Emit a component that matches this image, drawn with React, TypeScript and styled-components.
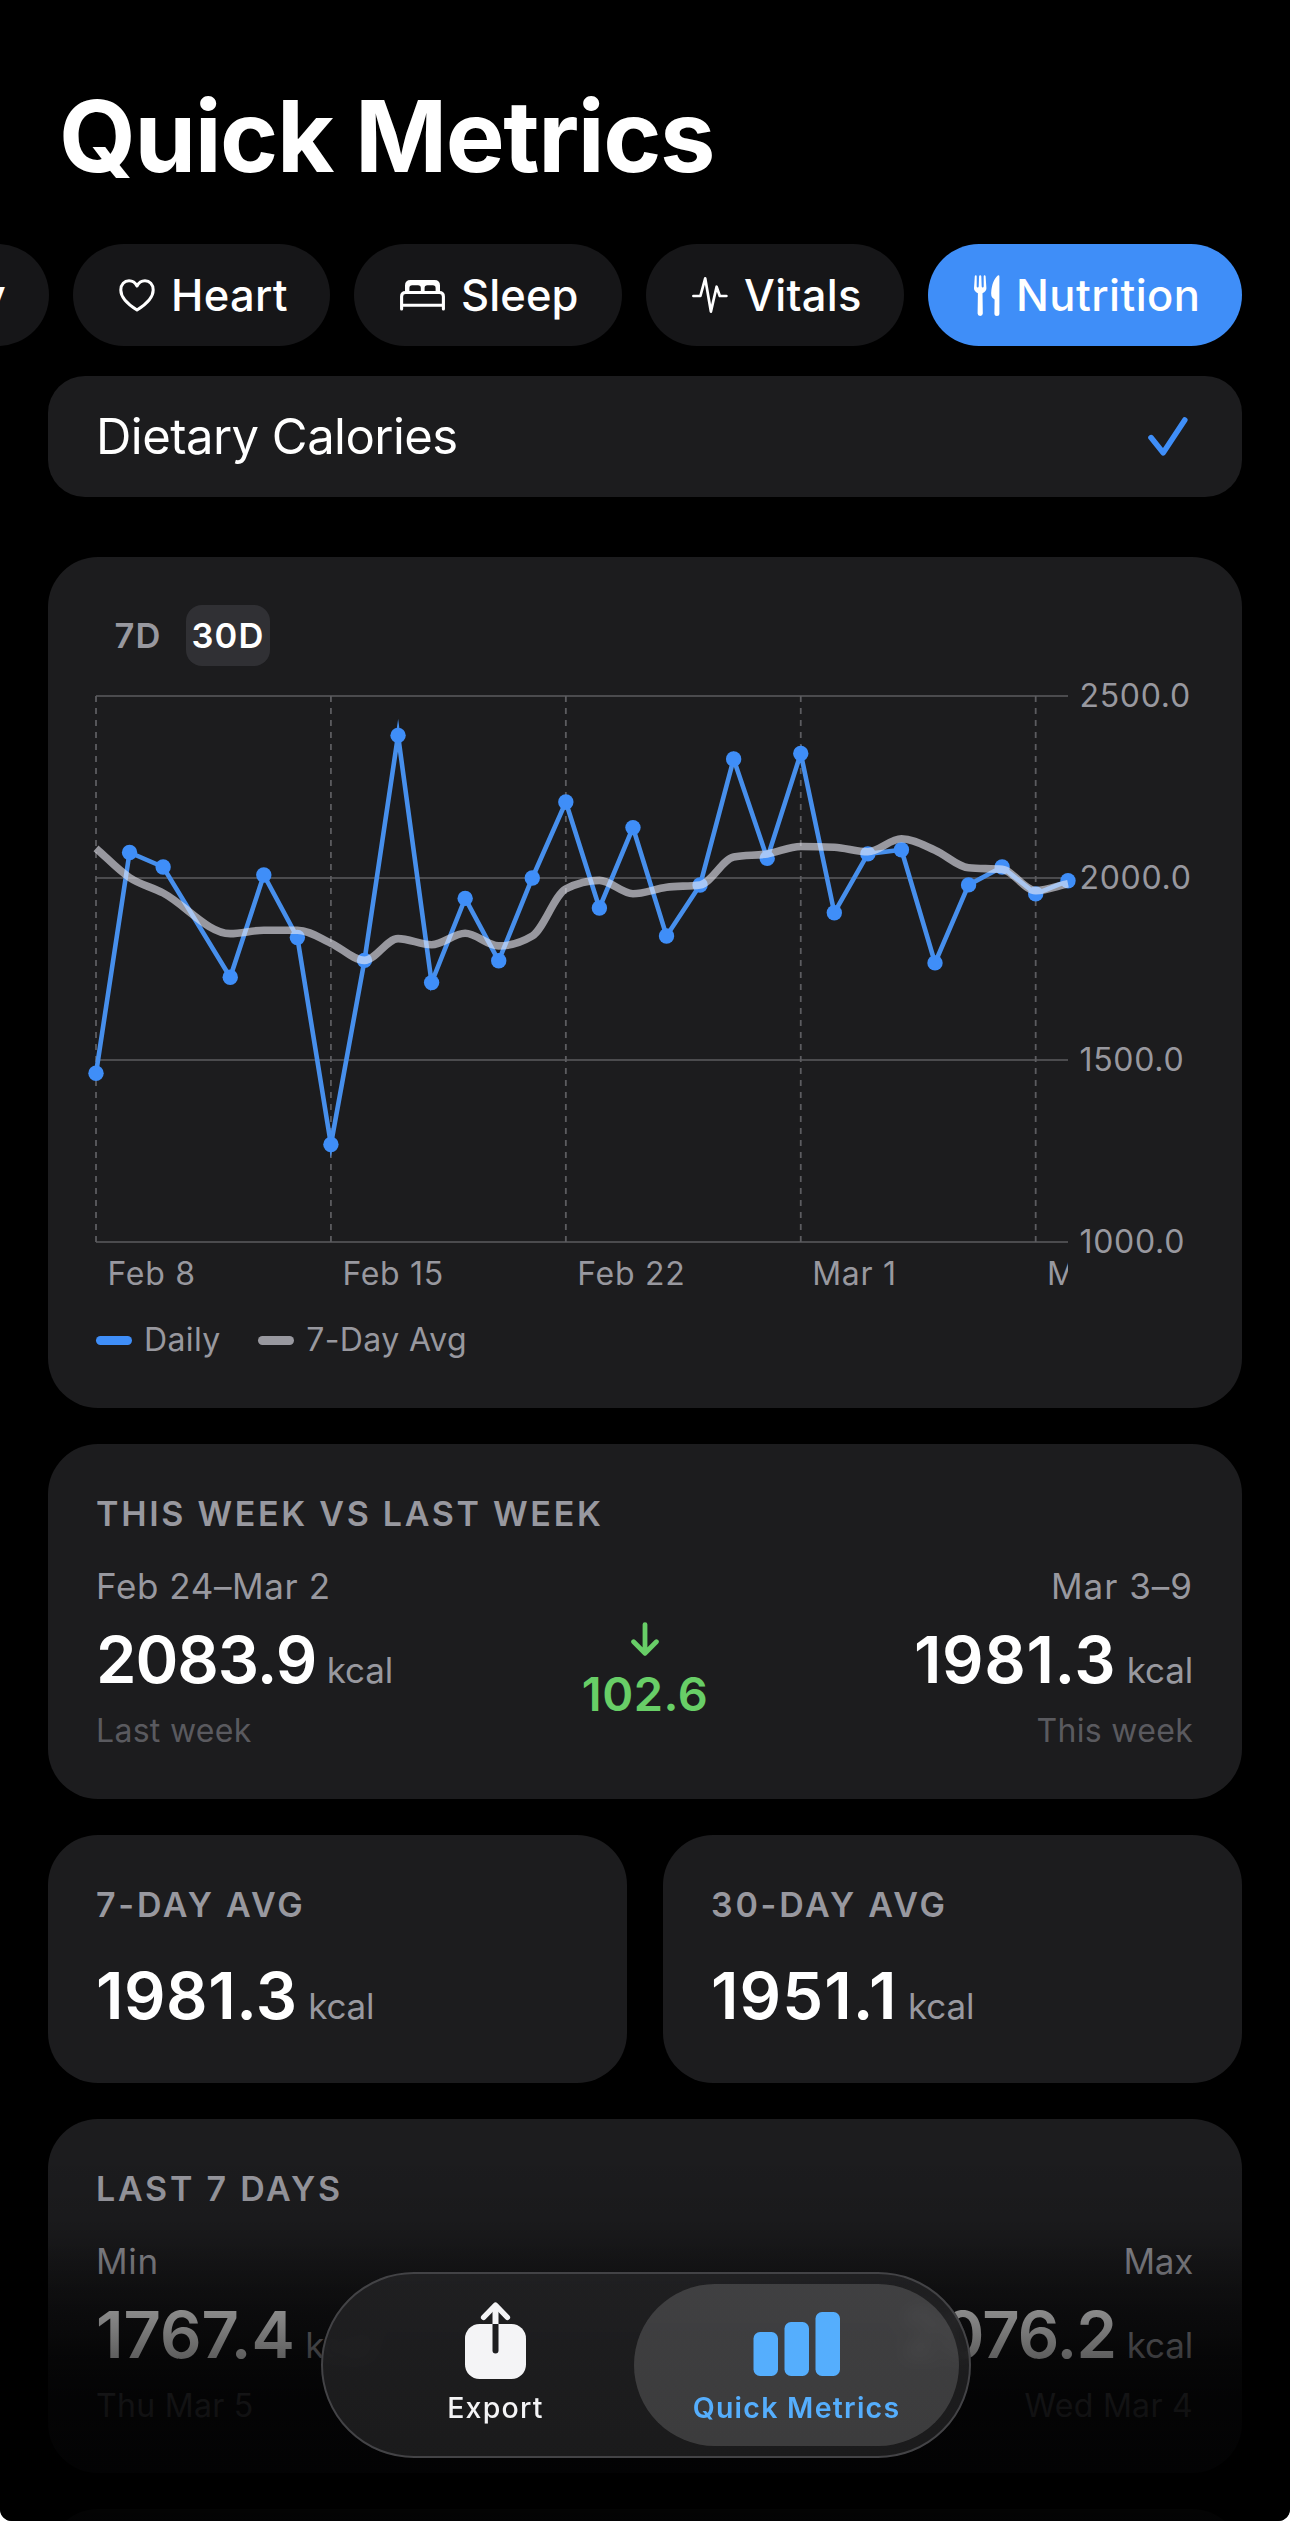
import React from "react";
import styled, { createGlobalStyle, css } from "styled-components";

const color = {
  card: "#1c1c1e",
  chip: "#161618",
  blue: "#3f8ef8",
  secondary: "#98989f",
  tertiary: "#5a5a5f",
  green: "#68ce67",
};

const GlobalStyle = createGlobalStyle`
  html, body { margin: 0; padding: 0; background: #fff; }
  body { font-family: Inter, "Liberation Sans", sans-serif; -webkit-font-smoothing: antialiased; }
  *, *::before, *::after { box-sizing: border-box; }
  button { font: inherit; color: inherit; border: 0; background: none; padding: 0; }
`;

const Screen = styled.div`
  position: relative;
  width: 1290px;
  height: 2521px;
  overflow: hidden;
  background: #000;
  color: #fff;
  border-radius: 0 0 12px 12px;
  white-space: nowrap;
`;

const Header = styled.header`
  height: 244px;
  padding: 76px 0 0 59px;
`;

const Title = styled.h1`
  margin: 0;
  font-size: 99px;
  font-weight: 700;
  line-height: 120px;
  letter-spacing: -1.42px;
`;

/* ---------- category chips ---------- */

const ChipRow = styled.nav`
  display: flex;
  justify-content: flex-end;
  gap: 24px;
  height: 102px;
  padding-right: 48px;
`;

const Chip = styled.button<{ $width: number; $active?: boolean; $tracking?: number }>`
  display: flex;
  flex: none;
  align-items: center;
  gap: 16px;
  width: ${(p) => p.$width}px;
  height: 102px;
  padding-left: 46px;
  border-radius: 51px;
  background: ${(p) => (p.$active ? color.blue : color.chip)};
  font-size: 43.5px;
  font-weight: 500;
  line-height: 60px;
  letter-spacing: ${(p) => p.$tracking ?? 0.3}px;
  svg { flex: none; display: block; }
`;

const ClippedChip = styled(Chip)`
  justify-content: flex-end;
  padding: 0 43px 0 0;
`;

/* ---------- cards ---------- */

const Main = styled.main`
  display: flex;
  flex-direction: column;
  gap: 36px;
  padding: 30px 48px 0;
`;

const OptionRow = styled.section`
  display: flex;
  align-items: center;
  justify-content: space-between;
  height: 121px;
  margin-bottom: 24px;
  padding: 0 54px 0 48px;
  border-radius: 37px;
  background: ${color.card};
`;

const OptionName = styled.span`
  padding-top: 1px;
  font-size: 49px;
  line-height: 60px;
  letter-spacing: -0.53px;
`;

const Card = styled.section<{ $height: number; $fading?: boolean }>`
  flex: 1 0 auto;
  height: ${(p) => p.$height}px;
  padding: 50px 48px 0;
  border-radius: 50px;
  background: ${(p) =>
    p.$fading ? `linear-gradient(${color.card} 35%, #111113 68%, #16161b 100%)` : color.card};
`;

const CardHeading = styled.h2<{ $tracking?: number }>`
  margin: 0;
  color: ${color.secondary};
  font-size: 34px;
  font-weight: 600;
  line-height: 40px;
  letter-spacing: ${(p) => p.$tracking ?? 2.75}px;
`;

/* ---------- chart ---------- */

const Segments = styled.div`
  display: flex;
  gap: 6px;
  margin: -2px 0 30px;
`;

const Segment = styled.button<{ $active?: boolean }>`
  width: 84px;
  height: 61px;
  border-radius: 16px;
  background: ${(p) => (p.$active ? "#303034" : "transparent")};
  color: ${(p) => (p.$active ? "#fff" : color.secondary)};
  font-size: 34.5px;
  font-weight: 600;
  line-height: 61px;
  letter-spacing: 1.2px;
`;

const ChartBody = styled.div`
  display: flex;
  height: 546px;
`;

const Plot = styled.svg`
  flex: none;
  display: block;
  width: 972px;
  height: 546px;
  overflow: visible;
`;

const axisText = css`
  color: ${color.secondary};
  font-size: 32px;
  letter-spacing: 0.7px;
`;

const ValueAxis = styled.div`
  display: flex;
  flex-direction: column;
  justify-content: space-between;
  margin: -23px 0 -23px 11.5px;
  ${axisText}
  line-height: 46px;
`;

const DateAxis = styled.div`
  display: flex;
  width: 972px;
  margin-top: 12px;
  overflow: hidden;
  ${axisText}
  line-height: 40px;
  span { flex: none; width: 234.9px; padding-left: 11.5px; }
`;

const Legend = styled.div`
  display: flex;
  gap: 37.5px;
  margin-top: 26px;
`;

const LegendItem = styled.div<{ $swatch: string }>`
  display: flex;
  align-items: center;
  gap: 12px;
  ${axisText}
  line-height: 40px;
  letter-spacing: 0.4px;
  &::before {
    content: "";
    width: 36px;
    height: 9px;
    border-radius: 4.5px;
    background: ${(p) => p.$swatch};
  }
`;

/* ---------- statistics ---------- */

const Comparison = styled.div`
  display: grid;
  grid-template-columns: 1fr auto 1fr;
  margin-top: 31px;
`;

const Side = styled.div<{ $end?: boolean }>`
  display: flex;
  flex-direction: column;
  align-items: ${(p) => (p.$end ? "flex-end" : "flex-start")};
  padding-right: ${(p) => (p.$end ? 1 : 0)}px;
`;

const SideLabel = styled.span<{ $tracking?: number }>`
  color: ${color.secondary};
  font-size: 35px;
  line-height: 42px;
  letter-spacing: ${(p) => p.$tracking ?? 0.7}px;
`;

const Figure = styled.div<{ $tracking?: number; $top?: number }>`
  display: flex;
  align-items: baseline;
  height: 76px;
  margin-top: ${(p) => p.$top ?? 15}px;
  font-size: 65px;
  font-weight: 600;
  line-height: 76px;
  letter-spacing: ${(p) => p.$tracking ?? 0}px;
`;

const Unit = styled.span`
  margin-left: 10.5px;
  color: ${color.secondary};
  font-size: 35px;
  font-weight: 400;
  letter-spacing: -0.15px;
`;

const SideNote = styled.span`
  margin-top: 12.5px;
  color: ${color.tertiary};
  font-size: 32px;
  line-height: 40px;
  letter-spacing: 0.3px;
`;

const Change = styled.div`
  display: flex;
  flex-direction: column;
  align-items: center;
  gap: 12px;
  padding-top: 57px;
  color: ${color.green};
  font-size: 47px;
  font-weight: 600;
  line-height: 52px;
  letter-spacing: 0.5px;
  svg { display: block; }
`;

const CardPair = styled.div`
  display: grid;
  grid-template-columns: 1fr 1fr;
  gap: 36px;
`;

/* ---------- bottom chrome ---------- */

const BottomFade = styled.div`
  position: absolute;
  left: 0;
  right: 0;
  bottom: 0;
  height: 371px;
  background: linear-gradient(
    rgba(0, 0, 0, 0) 0,
    rgba(0, 0, 0, 0.08) 70px,
    rgba(0, 0, 0, 0.26) 110px,
    rgba(0, 0, 0, 0.42) 150px,
    rgba(0, 0, 0, 0.54) 185px,
    rgba(0, 0, 0, 0.64) 210px,
    rgba(0, 0, 0, 0.8) 250px,
    rgba(0, 0, 0, 0.86) 323px,
    rgba(0, 0, 0, 0.88) 371px
  );
`;

const TabBar = styled.nav`
  position: absolute;
  left: 321px;
  bottom: 63px;
  display: flex;
  width: 650px;
  height: 186px;
  padding: 10px;
  border: 2px solid #434346;
  border-radius: 93px;
  background: linear-gradient(rgba(34, 34, 36, 0.88), rgba(29, 29, 30, 0.92));
  backdrop-filter: blur(8px);
`;

const Tab = styled.button<{ $active?: boolean }>`
  display: flex;
  flex: none;
  flex-direction: column;
  align-items: center;
  gap: 11px;
  width: 325px;
  height: 162px;
  padding-top: 18px;
  border-radius: 81px;
  background: ${(p) => (p.$active ? "rgba(255, 255, 255, 0.15)" : "none")};
  color: ${(p) => (p.$active ? "#55aefd" : "#f4f4f6")};
  font-size: 28.5px;
  font-weight: ${(p) => (p.$active ? 600 : 500)};
  line-height: 34px;
  letter-spacing: 1.25px;
  & + & { margin-left: -24px; }
  svg { display: block; }
`;

/* ---------- icons ---------- */

const HeartIcon = () => (
  <svg width="36" height="33" viewBox="0 0 36 33" fill="none" stroke="#fff" strokeWidth="3" strokeLinejoin="round">
    <path d="M18 31C12 27.3 1.8 20 1.8 11C1.8 5.5 5.4 1.8 10 1.8C13.6 1.8 16.5 4 18 7C19.5 4 22.4 1.8 26 1.8C30.6 1.8 34.2 5.5 34.2 11C34.2 20 24 27.3 18 31Z" />
  </svg>
);

const BedIcon = () => (
  <svg width="45" height="31" viewBox="0 0 45 31" fill="none">
    <path
      fill="#fff"
      fillRule="evenodd"
      d="M5 13V5.5Q5 0 10.5 0H34.5Q40 0 40 5.5V13ZM9.4 11.4H20.8V8Q20.8 5.2 18 5.2H12.2Q9.4 5.2 9.4 8ZM24.6 11.4H35.6V8Q35.6 5.2 32.8 5.2H27.4Q24.6 5.2 24.6 8Z"
    />
    <path
      d="M1.6 29V16.5Q1.6 12.5 5.6 12.5H39.4Q43.4 12.5 43.4 16.5V29M1.6 25.2H43.4"
      stroke="#fff"
      strokeWidth="3.1"
      strokeLinecap="round"
    />
  </svg>
);

const PulseIcon = () => (
  <svg width="36" height="38" viewBox="0 0 36 38" fill="none" stroke="#fff" strokeWidth="2.7" strokeLinecap="round" strokeLinejoin="round">
    <path d="M1.4 20H8.4L13.2 2.3L18.9 35.6L24.6 10.7L27.8 20H34.4" />
  </svg>
);

const CutleryIcon = () => (
  <svg width="26" height="41" viewBox="0 0 26 41" fill="#fff">
    <path d="M0 13.2L0.8 1.2Q1 0.2 1.8 0.2Q2.7 0.2 2.7 1.2V11.6Q2.8 12.6 3.7 12.6Q4.6 12.6 4.7 11.6L5.1 1.2Q5.2 0.2 6.2 0.2Q7.2 0.2 7.3 1.2L7.7 11.6Q7.8 12.6 8.7 12.6Q9.6 12.6 9.7 11.6V1.2Q9.7 0.2 10.6 0.2Q11.4 0.2 11.6 1.2L12.4 13.2Q12.4 16.4 8.5 18.2L8.8 38.6Q8.7 41 6.2 41Q3.7 41 3.6 38.6L3.9 18.2Q0 16.4 0 13.2Z" />
    <path d="M25.4 1.5V38.5Q25.4 41 22.9 41Q20.4 41 20.4 38.5L20.6 24.5L18.2 22.5Q17 21.2 17.2 17.5C17.6 9.5 20.4 3 23.8 0.4Q25.4-0.4 25.4 1.5Z" />
  </svg>
);

const CheckIcon = () => (
  <svg width="40" height="39" viewBox="0 0 40 39" fill="none" stroke={color.blue} strokeWidth="5.6" strokeLinecap="round" strokeLinejoin="round">
    <path d="M3 20.6L15.2 35.8L36.8 3" />
  </svg>
);

const DownArrowIcon = () => (
  <svg width="28" height="34" viewBox="0 0 28 34" fill="none" stroke="currentColor" strokeWidth="4.8" strokeLinecap="round" strokeLinejoin="round">
    <path d="M14 2.6V31M2.6 19.8L14 31.2L25.4 19.8" />
  </svg>
);

const ExportIcon = () => (
  <svg width="61" height="78" viewBox="0 0 61 78" fill="none" strokeLinecap="round" strokeLinejoin="round">
    <rect y="22" width="61" height="55" rx="14.5" fill="currentColor" />
    <path d="M30.5 20V48.5" stroke="#1f1f21" strokeWidth="6" />
    <path d="M30.5 22V4" stroke="currentColor" strokeWidth="6" strokeLinecap="butt" />
    <path d="M18.6 15.4L30.5 3.2L42.4 15.4" stroke="currentColor" strokeWidth="5.4" />
  </svg>
);

const BarsIcon = () => (
  <svg width="88" height="78" viewBox="0 0 88 78" fill="currentColor">
    <rect x="0.5" y="30" width="24.5" height="44" rx="6.5" />
    <rect x="31.5" y="20" width="24.5" height="54" rx="6.5" />
    <rect x="62.5" y="10" width="24.5" height="64" rx="6.5" />
  </svg>
);

/* ---------- chart data: [x, y] inside the 972 x 546 plot ---------- */

type Point = [number, number];

const dayX = (day: number) => (day === 29 ? 972 : day * 33.56);

const toPoints = (values: [number, number][]): Point[] => values.map(([d, y]) => [dayX(d), y]);

const daily = toPoints([
  [0, 377.3], [1, 156.5], [2, 171], [4, 281.3], [5, 179], [6, 241.5], [7, 448.5], [8, 264.4],
  [9, 39.4], [10, 286.6], [11, 202.4], [12, 264.8], [13, 182], [14, 106], [15, 212], [16, 131.6],
  [17, 240], [18, 189], [19, 63], [20, 162.4], [21, 57.5], [22, 216.7], [23, 157.9], [24, 153.8],
  [25, 266.9], [26, 188.9], [27, 171], [28, 197.9], [29, 184.8],
]);

const average = toPoints([
  [0, 152.3], [1, 181.6], [2, 197], [4, 237.6], [5, 234.2], [6, 234.2], [7, 247.2], [8, 264.4],
  [9, 242.6], [10, 248.7], [11, 237.3], [12, 249.9], [13, 240], [14, 192.9], [15, 184.4], [16, 197.8],
  [17, 191.3], [18, 188.9], [19, 161.1], [20, 157.9], [21, 150.5], [22, 151.3], [23, 155.8], [24, 142.8],
  [25, 154.2], [26, 171.8], [27, 173.4], [28, 194.6], [29, 187.7],
]);

const straightPath = (pts: Point[]) => "M" + pts.map(([x, y]) => `${x} ${y}`).join("L");

/* Monotone cubic interpolation keeps the average from overshooting its samples. */
const smoothPath = (pts: Point[]) => {
  const n = pts.length;
  const slope = pts.slice(1).map(([x, y], i) => (y - pts[i][1]) / (x - pts[i][0]));
  const tangent = pts.map((_, i) => {
    if (i === 0) return slope[0];
    if (i === n - 1) return slope[n - 2];
    const a = slope[i - 1];
    const b = slope[i];
    if (a * b <= 0) return 0;
    return Math.sign(a) * Math.min(Math.abs(a), Math.abs(b), Math.abs(a + b) / 4) * 2;
  });
  let d = `M${pts[0][0]} ${pts[0][1]}`;
  for (let i = 0; i < n - 1; i++) {
    const [x0, y0] = pts[i];
    const [x1, y1] = pts[i + 1];
    const h = (x1 - x0) / 3;
    d += `C${x0 + h} ${y0 + tangent[i] * h} ${x1 - h} ${y1 - tangent[i + 1] * h} ${x1} ${y1}`;
  }
  return d;
};

const CaloriesPlot = () => (
  <Plot viewBox="0 0 972 546" fill="none">
    {[0, 182, 364, 546].map((y) => (
      <path key={y} d={`M0 ${y}H972`} stroke="#4b4b4e" strokeWidth="2" />
    ))}
    {[0, 7, 14, 21, 28].map((d) => (
      <path key={d} d={`M${dayX(d)} 0V546`} stroke="#5c5c60" strokeWidth="1.8" strokeDasharray="6 6" />
    ))}
    <path d={straightPath(daily)} stroke="#478fec" strokeWidth="4.6" strokeMiterlimit="20" />
    {daily.map(([x, y]) => (
      <circle key={x} cx={x} cy={y} r="7.7" fill={color.blue} />
    ))}
    <path d={smoothPath(average)} stroke="rgba(235, 235, 245, 0.6)" strokeWidth="7.6" />
  </Plot>
);

export default function App() {
  return (
    <>
      <GlobalStyle />
      <Screen>
        <Header>
          <Title>Quick Metrics</Title>
        </Header>

        <ChipRow>
          <ClippedChip $width={280}>Activity</ClippedChip>
          <Chip $width={257}><HeartIcon />Heart</Chip>
          <Chip $width={268} $tracking={0.1}><BedIcon />Sleep</Chip>
          <Chip $width={258}><PulseIcon />Vitals</Chip>
          <Chip $width={314} $tracking={0.45} $active><CutleryIcon />Nutrition</Chip>
        </ChipRow>

        <Main>
          <OptionRow>
            <OptionName>Dietary Calories</OptionName>
            <CheckIcon />
          </OptionRow>

          <Card $height={851}>
            <Segments>
              <Segment>7D</Segment>
              <Segment $active>30D</Segment>
            </Segments>
            <ChartBody>
              <CaloriesPlot />
              <ValueAxis>
                <span>2500.0</span>
                <span>2000.0</span>
                <span>1500.0</span>
                <span>1000.0</span>
              </ValueAxis>
            </ChartBody>
            <DateAxis>
              <span>Feb 8</span>
              <span>Feb 15</span>
              <span>Feb 22</span>
              <span>Mar 1</span>
              <span>Mar 8</span>
            </DateAxis>
            <Legend>
              <LegendItem $swatch={color.blue}>Daily</LegendItem>
              <LegendItem $swatch={color.secondary}>7-Day Avg</LegendItem>
            </Legend>
          </Card>

          <Card $height={355}>
            <CardHeading $tracking={2.7}>THIS WEEK VS LAST WEEK</CardHeading>
            <Comparison>
              <Side>
                <SideLabel $tracking={0.6}>Feb 24–Mar 2</SideLabel>
                <Figure $tracking={-1.05}>2083.9<Unit>kcal</Unit></Figure>
                <SideNote>Last week</SideNote>
              </Side>
              <Change>
                <DownArrowIcon />
                102.6
              </Change>
              <Side $end>
                <SideLabel $tracking={1}>Mar 3–9</SideLabel>
                <Figure $tracking={0.6}>1981.3<Unit>kcal</Unit></Figure>
                <SideNote>This week</SideNote>
              </Side>
            </Comparison>
          </Card>

          <CardPair>
            <Card $height={248}>
              <CardHeading>7-DAY AVG</CardHeading>
              <Figure $tracking={0.5} $top={33}>1981.3<Unit>kcal</Unit></Figure>
            </Card>
            <Card $height={248}>
              <CardHeading>30-DAY AVG</CardHeading>
              <Figure $tracking={1.1} $top={33}>1951.1<Unit>kcal</Unit></Figure>
            </Card>
          </CardPair>

          <Card $height={354} $fading>
            <CardHeading>LAST 7 DAYS</CardHeading>
            <Comparison>
              <Side>
                <SideLabel>Min</SideLabel>
                <Figure>1767.4<Unit>kcal</Unit></Figure>
                <SideNote>Thu Mar 5</SideNote>
              </Side>
              <span />
              <Side $end>
                <SideLabel $tracking={-0.3}>Max</SideLabel>
                <Figure $tracking={-0.8}>2076.2<Unit>kcal</Unit></Figure>
                <SideNote>Wed Mar 4</SideNote>
              </Side>
            </Comparison>
          </Card>

          <Card $height={354} />
        </Main>

        <BottomFade />
        <TabBar>
          <Tab>
            <ExportIcon />
            Export
          </Tab>
          <Tab $active>
            <BarsIcon />
            Quick Metrics
          </Tab>
        </TabBar>
      </Screen>
    </>
  );
}
